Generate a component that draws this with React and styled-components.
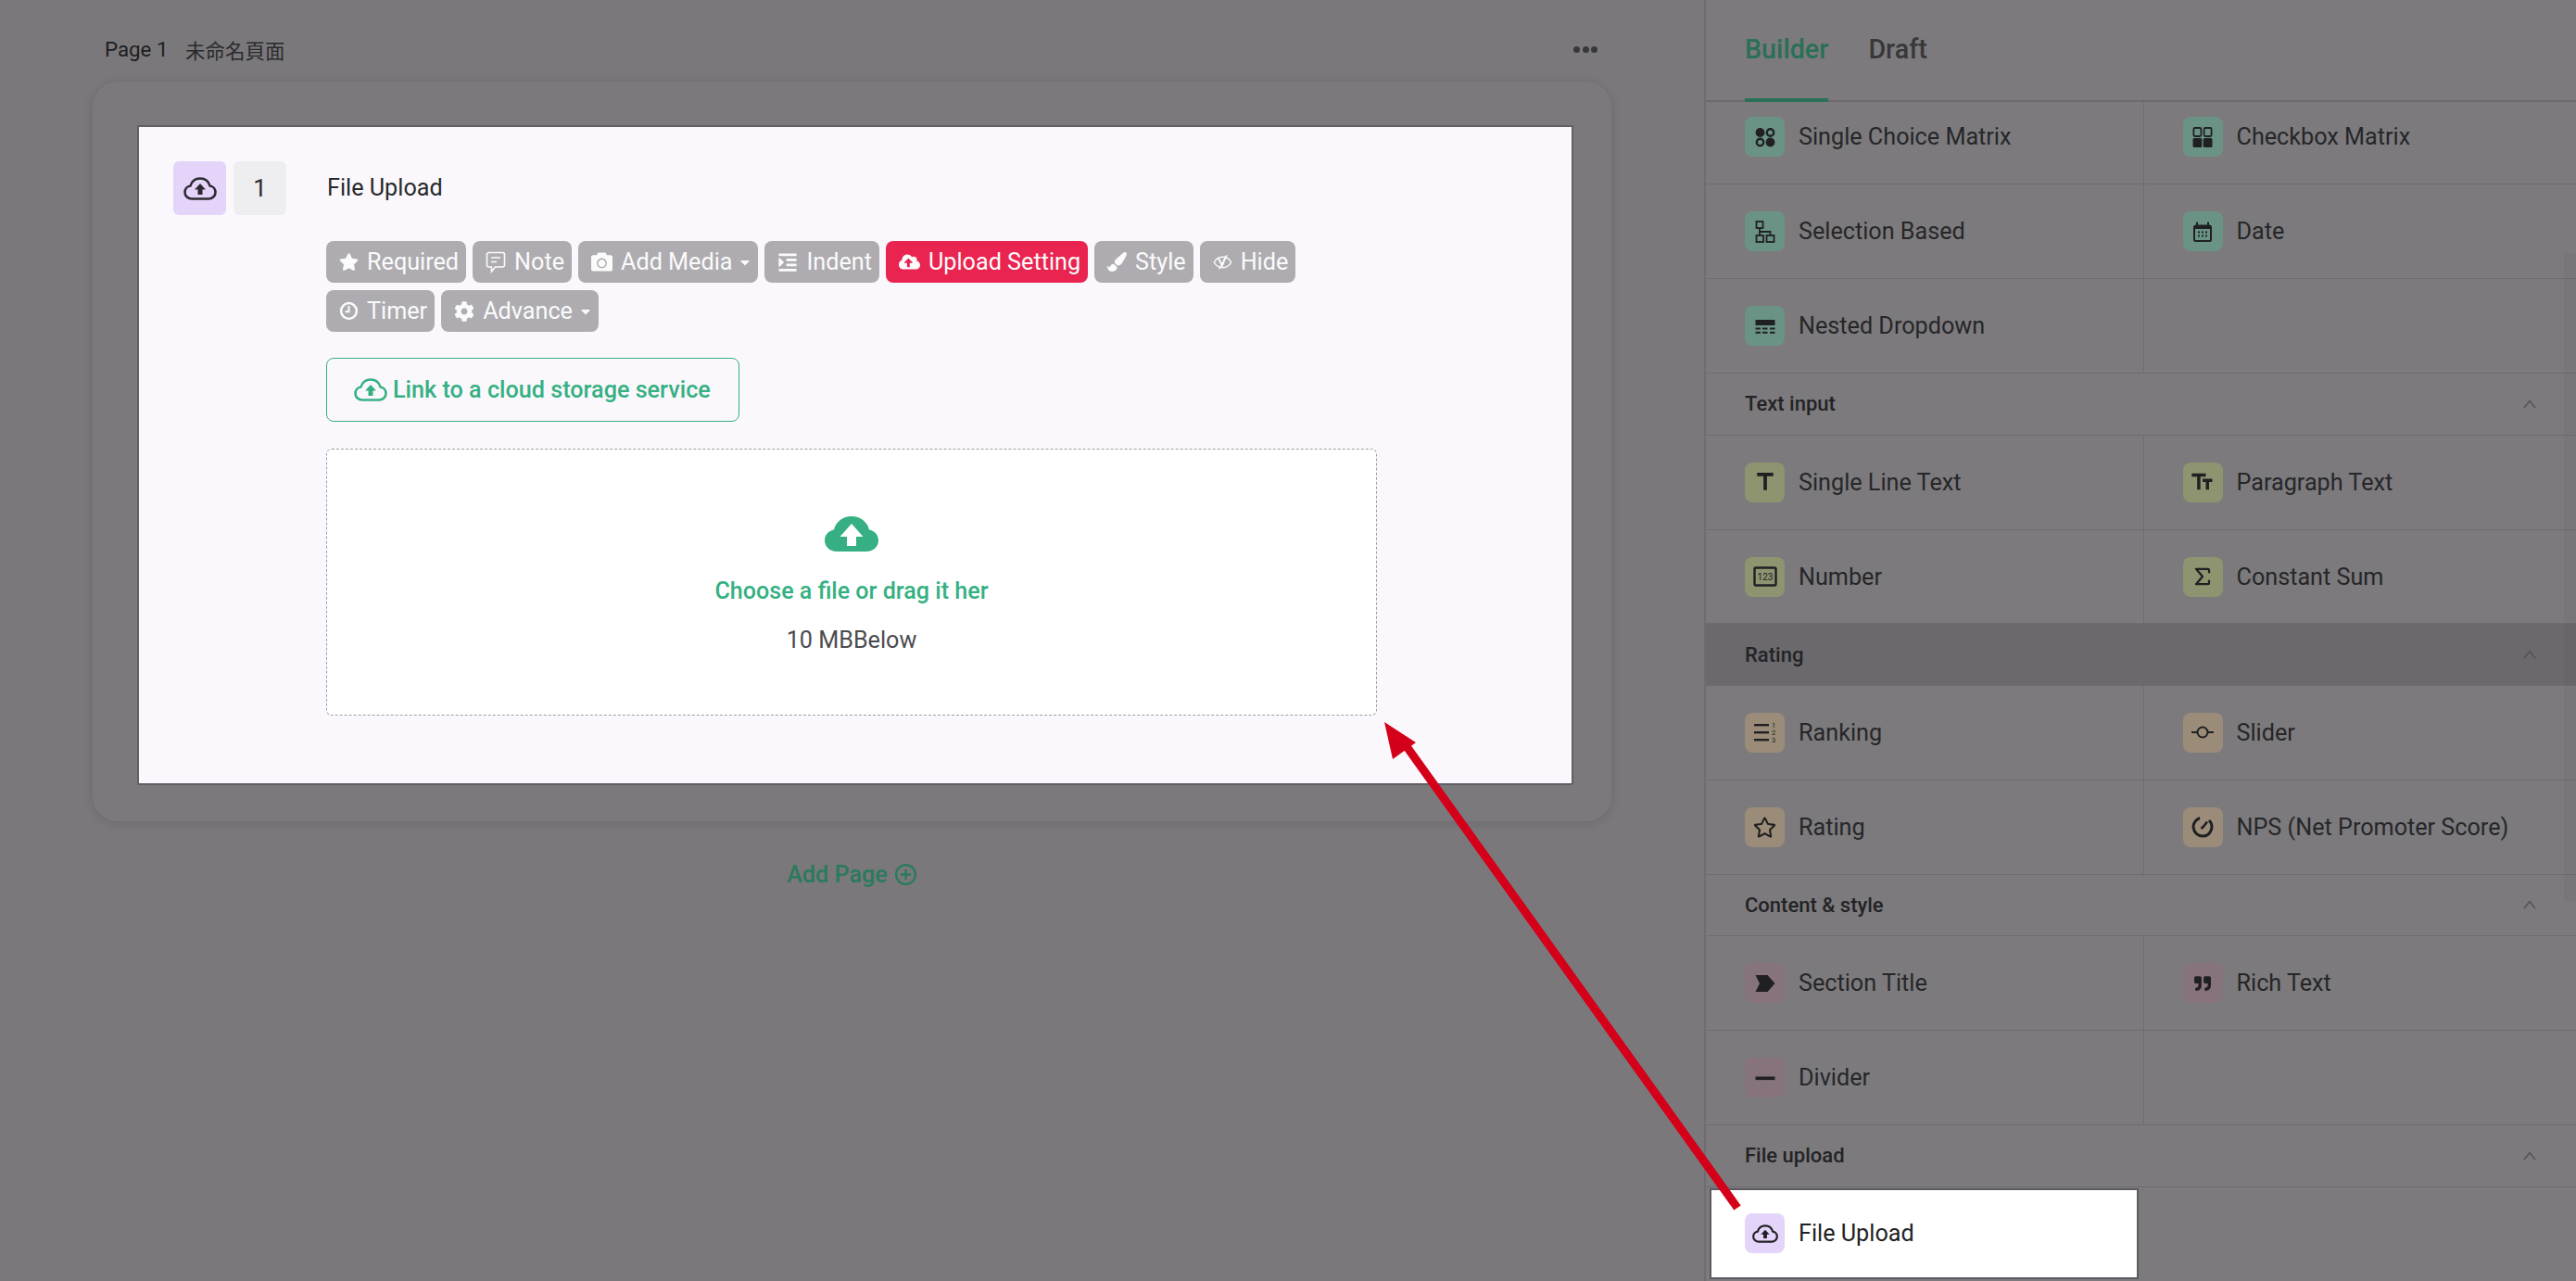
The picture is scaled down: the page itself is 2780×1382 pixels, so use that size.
import React from "react";
import styled, { createGlobalStyle } from "styled-components";
import { FaStar, FaCamera, FaCog, FaIndent, FaCloudUploadAlt, FaPaintBrush, FaRegStar, FaQuoteRight, FaCaretDown } from "react-icons/fa";
import { MdTitle, MdFormatSize } from "react-icons/md";
import { TbSum } from "react-icons/tb";

const Global = createGlobalStyle`
  html, body { margin: 0; padding: 0; width: 2780px; height: 1382px; overflow: hidden; background: #7a787b; }
  * { box-sizing: border-box; }
  body { font-family: Roboto, "Noto Sans CJK TC", sans-serif; color: #252527; }
`;

const Shell = styled.div`
  position: relative;
  display: grid;
  grid-template-columns: 1839px 941px;
  width: 2780px;
  height: 1382px;
  overflow: hidden;
`;

const Main = styled.main`
  display: flex;
  flex-direction: column;
  padding: 37px 99px 0;
`;

const PageHead = styled.div`
  display: flex;
  align-items: center;
  height: 32px;
  padding: 0 14px;
  font-size: 22.3px;
  color: #1e1e20;
`;

const PageNo = styled.span`
  width: 87px;
`;

const PageName = styled.span`
  flex: 1;
  font-size: 21.5px;
  color: #2a2a2c;
`;

const Dots = styled.div`
  display: flex;
  gap: 2.5px;
  margin-right: 2px;
`;

const Dot = styled.i`
  width: 7px;
  height: 7px;
  border-radius: 50%;
  background: #37373a;
`;

const Outer = styled.section`
  width: 1641px;
  height: 800px;
  margin-top: 18px;
  padding: 47px 41.5px 40px 47.5px;
  border-radius: 28px;
  background: #7b797c;
  border: 1px solid #737174;
  box-shadow: 0 2px 8px rgba(60, 58, 62, 0.18);
`;

const Inner = styled.div`
  height: 712px;
  padding: 37px 0 0 37.5px;
  background: #faf8fc;
  border: 2px solid #616067;
  border-bottom-right-radius: 2px;
`;

const Head = styled.div`
  display: flex;
  align-items: center;
  height: 58px;
`;

const TypeBadge = styled.div`
  display: flex;
  align-items: center;
  justify-content: center;
  width: 57px;
  height: 58px;
  border-radius: 6px;
  background: #e4d4fa;
  color: #2c2a30;
`;

const NumBadge = styled.div`
  display: flex;
  align-items: center;
  justify-content: center;
  width: 57px;
  height: 58px;
  margin-left: 8px;
  border-radius: 6px;
  background: #eeedf0;
  font-size: 26px;
  color: #2b2b2d;
`;

const QTitle = styled.div`
  margin-left: 44px;
  margin-top: -2px;
  font-size: 25.2px;
  color: #29292b;
`;

const Body = styled.div`
  width: 1134px;
  margin-left: 165px;
`;

const Tags = styled.div`
  display: flex;
  flex-wrap: wrap;
  gap: 8px 7px;
  width: 1100px;
  margin-top: 28px;
`;

const Tag = styled.div`
  display: flex;
  align-items: center;
  gap: 9px;
  height: 45px;
  padding: 0 8px 0 14px;
  border-radius: 8px;
  font-size: 25.2px;
  color: #fbfbfc;
  background: ${(p) => (p.$active ? "#ea2450" : "#aeacb0")};
  svg { flex: none; }
`;

const Caret = styled(FaCaretDown)`
  margin: 0 -2px 0 -3px;
`;

const LinkBtn = styled.div`
  display: flex;
  align-items: center;
  gap: 6px;
  width: 446px;
  height: 69px;
  margin-top: 28px;
  padding-left: 29px;
  border: 1.5px solid #36b082;
  border-radius: 8px;
  font-size: 25.2px;
  font-weight: 500;
  color: #36b082;
`;

const Drop = styled.div`
  display: flex;
  flex-direction: column;
  align-items: center;
  width: 1134px;
  height: 288px;
  margin-top: 29px;
  padding-top: 72px;
  background: #ffffff;
  border: 1px dashed #9f9ea3;
  border-radius: 6px;
`;

const CloudWrap = styled.div`
  color: #36b082;
  line-height: 0;
`;

const DropTitle = styled.div`
  margin-top: 28px;
  font-size: 25.1px;
  font-weight: 500;
  color: #36b082;
`;

const DropHint = styled.div`
  margin-top: 23.5px;
  font-size: 25.2px;
  color: #4c4b50;
`;

const AddPage = styled.div`
  display: flex;
  align-items: center;
  justify-content: center;
  gap: 7px;
  width: 1641px;
  margin-top: 42px;
  height: 28px;
  font-size: 25.2px;
  font-weight: 500;
  color: #2a7a5e;
`;

const Panel = styled.aside`
  position: relative;
  display: flex;
  flex-direction: column;
  height: 1382px;
  border-left: 2px solid #6f6d71;
  background: #7c7a7d;
  overflow: hidden;
`;

const TabBar = styled.div`
  position: relative;
  z-index: 1;
  display: flex;
  gap: 43px;
  flex: none;
  height: 110px;
  padding: 0 0 0 42px;
  background: #7c7a7d;
  border-bottom: 2px solid #6c6a6e;
`;

const Tab = styled.div`
  height: 110px;
  padding-top: 36px;
  font-size: 28.7px;
  font-weight: 500;
  color: ${(p) => (p.$active ? "#2a6f57" : "#38373a")};
  border-bottom: 4px solid ${(p) => (p.$active ? "#2a6f57" : "transparent")};
`;

const List = styled.div`
  margin-top: -12.5px;
`;

const SectionHead = styled.div`
  display: flex;
  align-items: center;
  justify-content: space-between;
  height: 66.5px;
  padding: 0 43px 0 42px;
  font-size: 22px;
  font-weight: 500;
  color: #232325;
  background: ${(p) => (p.$hover ? "#6b696d" : "transparent")};
  border-bottom: 1.5px solid #6e6c70;
`;

const Grid = styled.div`
  display: grid;
  grid-template-columns: 473px 1fr;
`;

const Cell = styled.div`
  display: flex;
  align-items: center;
  height: 101.9px;
  padding-left: ${(p) => (p.$right ? 41.5 : 42)}px;
  border-bottom: 1.5px solid #6e6c70;
  border-right: ${(p) => (p.$right ? "none" : "1.5px solid #6e6c70")};
  font-size: 25.2px;
  color: #262628;
`;

const Selected = styled(Cell)`
  width: 463px;
  height: 98px;
  margin: 1px 0 0 4px;
  padding-left: 36px;
  background: #ffffff;
  border: 2px solid #5c5b60;
  color: #222224;
`;

const RowIcon = styled.div`
  display: flex;
  align-items: center;
  justify-content: center;
  flex: none;
  width: 43px;
  height: 43px;
  margin-right: 15px;
  border-radius: 8px;
  background: ${(p) => p.$tint};
  color: #202023;
`;

const ScrollTrack = styled.div`
  position: absolute;
  top: 273px;
  right: 0;
  width: 13px;
  height: 700px;
  background: rgba(70, 68, 72, 0.07);
`;

const ArrowLayer = styled.svg`
  position: absolute;
  inset: 0;
  z-index: 5;
  pointer-events: none;
`;

const FlippedSize = styled(MdFormatSize)`
  transform: scaleX(-1);
`;

const Cloud = ({ w = 36, h = 25, sw = 2.6 }) => (
  <svg width={w} height={h} viewBox="0 0 36 25" fill="none">
    <path d="M9 23.500H27C31 23.500 34.500 20.500 34.500 16.500 34.500 13 32 10 28.500 9.500 27 4.500 23 1.500 18 1.500 13 1.500 9 4.500 7.500 9.500 4 10 1.500 13 1.500 16.500 1.500 20.500 5 23.500 9 23.500Z" stroke="currentColor" strokeWidth={sw} strokeLinejoin="round" />
    <path d="M18 7l6 6.500h-3.500V19h-5v-5.500H12z" fill="currentColor" />
  </svg>
);

const CloudSolid = ({ w = 58, h = 38 }) => (
  <svg width={w} height={h} viewBox="0 0 58 38">
    <path d="M13 38C5.500 38 0 32.800 0 26c0-6 4.200-10.600 10-11.600C12 6 19.600 0 29 0s17 6 19 14.400c5.800 1 10 5.600 10 11.600 0 6.800-5.500 12-13 12z" fill="currentColor" />
    <path d="M29 8l12.500 14H34v10H24V22h-7.500z" fill="#fff" />
  </svg>
);

const NoteIcon = () => (
  <svg width="22" height="24" viewBox="0 0 21 24" fill="none" stroke="currentColor" strokeWidth="1.600">
    <path d="M3 1.500h15a2 2 0 0 1 2 2V15a2 2 0 0 1-2 2h-8l-4 5v-5H3a2 2 0 0 1-2-2V3.500a2 2 0 0 1 2-2z" />
    <path d="M5.500 7h10M5.500 11.500h6" />
  </svg>
);

const ClockIcon = () => (
  <svg width="21" height="21" viewBox="0 0 20 20" fill="none" stroke="currentColor" strokeWidth="2.400">
    <circle cx="10" cy="10" r="8" />
    <path d="M10 4.800V10.600H6.200" strokeWidth="1.900" />
  </svg>
);

const HideIcon = () => (
  <svg width="21" height="18" viewBox="0 0 25 20" fill="none" stroke="currentColor" strokeWidth="1.700">
    <path d="M1.500 10C4 5.500 8 3.200 12.500 3.200S21 5.500 23.500 10C21 14.500 17 16.800 12.500 16.800S4 14.500 1.500 10z" />
    <path d="M7 4.500l5 10 4.500-12.500" strokeWidth="2.200" />
    <path d="M8 18.500L18 1" />
  </svg>
);

const I24 = ({ children, fill = "currentColor" }) => (
  <svg width="24" height="24" viewBox="0 0 24 24" fill={fill} stroke="none">{children}</svg>
);

const rowIcons = {
  single: (
    <I24>
      <circle cx="6.500" cy="7" r="4.900" />
      <circle cx="17.500" cy="7" r="3.700" fill="none" stroke="currentColor" strokeWidth="2.400" />
      <circle cx="6.500" cy="17.500" r="3.700" fill="none" stroke="currentColor" strokeWidth="2.400" />
      <circle cx="17.500" cy="17.500" r="4.900" />
    </I24>
  ),
  check: (
    <I24>
      <rect x="2.400" y="2" width="8" height="9" rx="1.500" fill="none" stroke="currentColor" strokeWidth="1.800" />
      <rect x="13.600" y="2" width="8" height="9" rx="1.500" fill="none" stroke="currentColor" strokeWidth="1.800" />
      <rect x="1.500" y="13" width="9.800" height="10" rx="1.500" />
      <rect x="12.700" y="13" width="9.800" height="10" rx="1.500" />
    </I24>
  ),
  flow: (
    <I24>
      <g fill="none" stroke="currentColor" strokeWidth="1.800">
        <rect x="2.500" y="1" width="7" height="7" />
        <rect x="2.500" y="16" width="7.500" height="7" />
        <rect x="13.500" y="16" width="8" height="7" />
        <path d="M6 8v4h11.500v4M6 12v4" />
      </g>
    </I24>
  ),
  date: (
    <I24>
      <path d="M5 1.500h2V4.500h10V1.500h2V4.500a3 3 0 0 1 3 3v13a2.500 2.500 0 0 1-2.500 2.500h-15A2.500 2.500 0 0 1 2 20.500v-13a3 3 0 0 1 3-3z" />
      <rect x="4" y="9" width="16" height="12" fill="#6a9386" />
      <g>
        <rect x="7" y="11.500" width="2" height="2" /><rect x="11" y="11.500" width="2" height="2" /><rect x="15" y="11.500" width="2" height="2" />
        <rect x="7" y="15.500" width="2" height="2" /><rect x="11" y="15.500" width="2" height="2" /><rect x="15" y="15.500" width="2" height="2" />
      </g>
    </I24>
  ),
  nested: (
    <I24>
      <rect x="1.500" y="5" width="21" height="6" />
      <rect x="1.500" y="13.500" width="5.500" height="2" /><rect x="9" y="13.500" width="5.500" height="2" /><rect x="17" y="13.500" width="5.500" height="2" />
      <rect x="1.500" y="17.800" width="5.500" height="2" /><rect x="9" y="17.800" width="5.500" height="2" /><rect x="17" y="17.800" width="5.500" height="2" />
    </I24>
  ),
  single_line: <MdTitle size={30} />,
  para: <FlippedSize size={28} />,
  number: (
    <svg width="26" height="24" viewBox="0 0 26 24">
      <rect x="1.500" y="2.500" width="23" height="19" rx="1.500" fill="none" stroke="currentColor" strokeWidth="2.400" />
      <text x="13" y="16" fontFamily="Roboto" fontSize="10" fill="currentColor" textAnchor="middle">123</text>
    </svg>
  ),
  sum: <TbSum size={28} />,
  rank: (
    <svg width="26" height="26" viewBox="0 0 26 26">
      <rect x="1" y="4" width="16" height="2.400" fill="currentColor" />
      <rect x="1" y="12" width="16" height="2.400" fill="currentColor" />
      <rect x="1" y="20" width="16" height="2.400" fill="currentColor" />
      <g fontFamily="Roboto" fontSize="7.500" fill="currentColor" textAnchor="middle">
        <text x="22" y="7.500">1</text><text x="22" y="15.500">2</text><text x="22" y="23.500">3</text>
      </g>
    </svg>
  ),
  slider: (
    <svg width="26" height="24" viewBox="0 0 26 24" fill="none" stroke="currentColor" strokeWidth="2">
      <circle cx="13" cy="12" r="5.500" />
      <path d="M1 12h6.500M18.500 12H25" />
    </svg>
  ),
  star: <FaRegStar size={25} />,
  nps: (
    <svg width="26" height="26" viewBox="0 0 26 26" fill="none" stroke="currentColor" strokeWidth="3">
      <path d="M10 3.500A10 10 0 0 0 13 23a10 10 0 0 0 7-17" />
      <path d="M18 7.500l-5 6.500" strokeWidth="2.600" />
      <circle cx="12.500" cy="14" r="1.600" fill="currentColor" stroke="none" />
    </svg>
  ),
  section: (
    <I24><path d="M1.500 3h13l8 9-8 9h-13l4.500-9z" /></I24>
  ),
  rich: <FaQuoteRight size={18} />,
  divider: (
    <I24><rect x="1.500" y="10.500" width="21" height="3.600" /></I24>
  ),
};

const Chevron = () => (
  <svg width="14" height="10" viewBox="0 0 14 10" fill="none" stroke="#504f53" strokeWidth="1.300">
    <path d="M1 9l6-7.500L13 9" />
  </svg>
);

const G = "#6a9386", O = "#8e9370", T = "#9a8c78", P = "#87737e", V = "#e4d4fa";

const sections = [
  { rows: [
    ["Single Choice Matrix", "single", G, "Checkbox Matrix", "check"],
    ["Selection Based", "flow", G, "Date", "date"],
    ["Nested Dropdown", "nested", G],
  ] },
  { title: "Text input", rows: [
    ["Single Line Text", "single_line", O, "Paragraph Text", "para"],
    ["Number", "number", O, "Constant Sum", "sum"],
  ] },
  { title: "Rating", hover: true, rows: [
    ["Ranking", "rank", T, "Slider", "slider"],
    ["Rating", "star", T, "NPS (Net Promoter Score)", "nps"],
  ] },
  { title: "Content & style", rows: [
    ["Section Title", "section", P, "Rich Text", "rich"],
    ["Divider", "divider", P],
  ] },
];

const tags = [
  [<FaStar size={21} />, "Required"],
  [<NoteIcon />, "Note"],
  [<FaCamera size={23} />, "Add Media", true],
  [<FaIndent size={22} />, "Indent"],
  [<FaCloudUploadAlt size={23} />, "Upload Setting", false, true],
  [<FaPaintBrush size={21} />, "Style"],
  [<HideIcon />, "Hide"],
  [<ClockIcon />, "Timer"],
  [<FaCog size={22} />, "Advance", true],
];

export default function App() {
  return (
    <Shell>
      <Global />
      <Main>
        <PageHead>
          <PageNo>Page 1</PageNo>
          <PageName>未命名頁面</PageName>
          <Dots><Dot /><Dot /><Dot /></Dots>
        </PageHead>
        <Outer>
          <Inner>
            <Head>
              <TypeBadge><Cloud /></TypeBadge>
              <NumBadge>1</NumBadge>
              <QTitle>File Upload</QTitle>
            </Head>
            <Body>
              <Tags>
                {tags.map(([icon, label, caret, active]) => (
                  <Tag key={label} $active={active}>
                    {icon}
                    <span>{label}</span>
                    {caret && <Caret size={16} />}
                  </Tag>
                ))}
              </Tags>
              <LinkBtn><Cloud /><span>Link to a cloud storage service</span></LinkBtn>
              <Drop>
                <CloudWrap><CloudSolid /></CloudWrap>
                <DropTitle>Choose a file or drag it her</DropTitle>
                <DropHint>10 MBBelow</DropHint>
              </Drop>
            </Body>
          </Inner>
        </Outer>
        <AddPage>
          <span>Add Page</span>
          <svg width="25" height="25" viewBox="0 0 24 24" fill="none" stroke="currentColor" strokeWidth="2.200">
            <circle cx="12" cy="12" r="10" />
            <path d="M12 6.500v11M6.500 12h11" />
          </svg>
        </AddPage>
      </Main>
      <Panel>
        <TabBar>
          <Tab $active>Builder</Tab>
          <Tab>Draft</Tab>
        </TabBar>
        <List>
          {sections.map((s, i) => (
            <div key={i}>
              {s.title && <SectionHead $hover={s.hover}><span>{s.title}</span><Chevron /></SectionHead>}
              <Grid>
                {s.rows.map((r) => (
                  <React.Fragment key={r[0]}>
                    <Cell><RowIcon $tint={r[2]}>{rowIcons[r[1]]}</RowIcon>{r[0]}</Cell>
                    <Cell $right>{r[3] && <><RowIcon $tint={r[2]}>{rowIcons[r[4]]}</RowIcon>{r[3]}</>}</Cell>
                  </React.Fragment>
                ))}
              </Grid>
            </div>
          ))}
          <SectionHead><span>File upload</span><Chevron /></SectionHead>
          <Grid>
            <Selected><RowIcon $tint={V}><Cloud w={28} h={20} sw={2.8} /></RowIcon>File Upload</Selected>
          </Grid>
        </List>
        <ScrollTrack />
      </Panel>
      <ArrowLayer width="2780" height="1382" viewBox="0 0 2780 1382">
        <path d="M1875 1303L1512 797" stroke="#d4001a" strokeWidth="9" fill="none" />
        <path d="M1494 779L1528 801L1503 819Z" fill="#d4001a" />
      </ArrowLayer>
    </Shell>
  );
}
